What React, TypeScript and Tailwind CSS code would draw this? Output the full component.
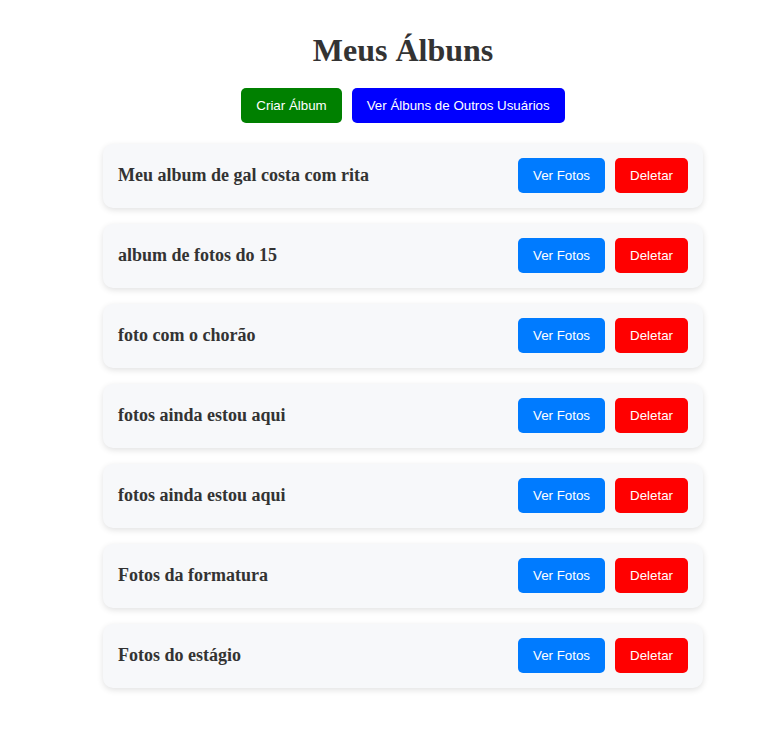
import React from "react";

const albums = [
  "Meu album de gal costa com rita",
  "album de fotos do 15",
  "foto com o chorão",
  "fotos ainda estou aqui",
  "fotos ainda estou aqui",
  "Fotos da formatura",
  "Fotos do estágio",
];

const App = () => {
  return (
    <div className="min-h-screen bg-white pl-[26px] pt-[32px] pb-[44px] flex flex-col items-center font-['Liberation_Serif',serif] text-[#333]">
      <h1 className="text-[32px] leading-[37px] font-bold">Meus Álbuns</h1>

      {/* top actions */}
      <div className="flex gap-[10px] mt-[19px] font-['Liberation_Sans',Arial,sans-serif] text-[13.333px] text-white">
        <button className="h-[35px] px-[15px] rounded-[5px] bg-[#008000]">
          Criar Álbum
        </button>
        <button className="h-[35px] px-[15px] rounded-[5px] bg-[#0000ff]">
          Ver Álbuns de Outros Usuários
        </button>
      </div>

      {/* album list */}
      <div className="flex flex-col gap-[16px] w-[600px] mt-[21px]">
        {albums.map((title, i) => (
          <div
            key={i}
            className="flex items-center justify-between h-[64px] px-[15px] pb-[1px] rounded-[10px] bg-[#f7f8fa] shadow-[0_2px_6px_rgba(0,0,0,0.12)]"
          >
            <span className="text-[18px] font-bold">{title}</span>
            <div className="flex gap-[10px] font-['Liberation_Sans',Arial,sans-serif] text-[13.333px] text-white">
              <button className="h-[35px] px-[15px] rounded-[5px] bg-[#007bff]">
                Ver Fotos
              </button>
              <button className="h-[35px] px-[15px] rounded-[5px] bg-[#ff0000]">
                Deletar
              </button>
            </div>
          </div>
        ))}
      </div>
    </div>
  );
};

export default App;
